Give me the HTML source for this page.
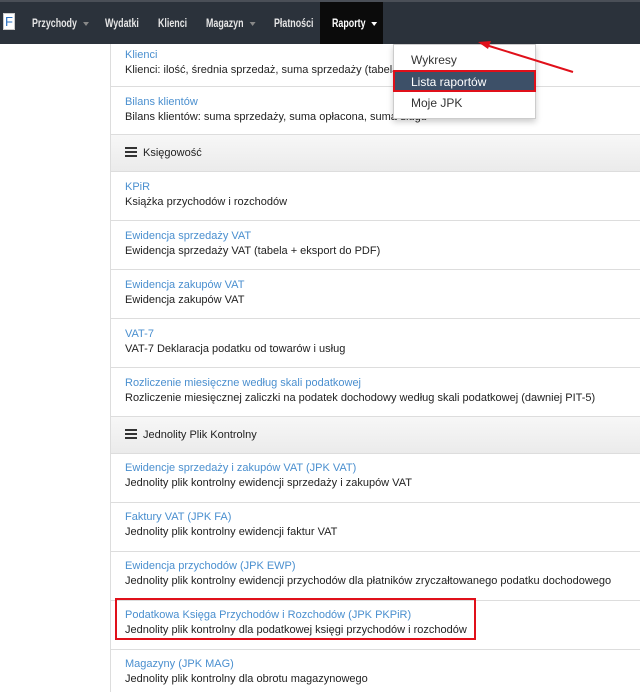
<!DOCTYPE html>
<html><head><meta charset="utf-8"><style>
*{margin:0;padding:0;box-sizing:border-box}
body{width:640px;height:692px;overflow:hidden;background:#fff;font-family:"Liberation Sans",Arial,sans-serif;font-size:11px;color:#222;position:relative}
.nav{position:absolute;left:0;top:0;width:640px;height:44px;background:#2b323b;border-top:2px solid #4a4f57}
.nav span{position:absolute;top:14px;color:#e6e6e6;font-size:12px;font-weight:bold;transform:scaleX(0.74);transform-origin:0 0;white-space:nowrap}
.caret{display:inline-block;width:0;height:0;border-left:4.5px solid transparent;border-right:4.5px solid transparent;border-top:4px solid #888;vertical-align:middle;margin-left:8px}
.rap{position:absolute;left:320px;top:0;width:63px;height:42px;background:#0b0b0b}
.logo{position:absolute;left:3px;top:11px;width:12px;height:17px;background:#fff;border:1px solid #ccc;color:#2a70c0;font-size:13px;line-height:15px;text-align:center}
.main{position:absolute;left:110px;top:44px;width:530px;height:648px;border-left:1px solid #ddd}
.row{position:absolute;left:0;width:530px;border-bottom:1px solid #ddd;padding-left:14px}
.row a{display:block;color:#4a8fcf;font-size:11px;margin-top:3px}
.row p{font-size:11px;margin-top:3px;color:#222}
.hdr{position:absolute;left:0;width:530px;height:37px;background:linear-gradient(#f7f7f7,#ebebeb);border-bottom:1px solid #ddd;padding:12px 0 0 14px;font-size:11px}
.hb{display:inline-block;width:12px;height:10px;border-top:2px solid #333;border-bottom:2px solid #333;position:relative;vertical-align:-1px;margin-right:6px}
.hb:after{content:"";position:absolute;left:0;top:2px;width:12px;height:2px;background:#333}
.dd{position:absolute;left:393px;top:44px;width:143px;height:75px;background:#fff;border:1px solid #ccc;box-shadow:0 3px 6px rgba(0,0,0,.2)}
.dd div{position:absolute;left:17px;font-size:12px;color:#333}
.sel{position:absolute;left:393px;top:70px;width:143px;height:22px;background:#3d5068;border:2px solid #e0101a}
.sel span{position:absolute;left:16px;top:3px;color:#fff;font-size:12px}
</style></head><body>
<div class="main">
<div class="row" style="top:0;height:43px;padding-top:2px"><a>Klienci</a><p>Klienci: ilość, średnia sprzedaż, suma sprzedaży (tabela + eksport do PDF)</p></div>
<div class="row" style="top:43px;height:48px;padding-top:6px"><a>Bilans klientów</a><p>Bilans klientów: suma sprzedaży, suma opłacona, suma długu</p></div>
<div class="hdr" style="top:91px"><span class="hb"></span>Księgowość</div>
<div class="row" style="top:128px;height:49px;padding-top:6px"><a>KPiR</a><p>Książka przychodów i rozchodów</p></div>
<div class="row" style="top:177px;height:49px;padding-top:6px"><a>Ewidencja sprzedaży VAT</a><p>Ewidencja sprzedaży VAT (tabela + eksport do PDF)</p></div>
<div class="row" style="top:226px;height:49px;padding-top:6px"><a>Ewidencja zakupów VAT</a><p>Ewidencja zakupów VAT</p></div>
<div class="row" style="top:275px;height:49px;padding-top:6px"><a>VAT-7</a><p>VAT-7 Deklaracja podatku od towarów i usług</p></div>
<div class="row" style="top:324px;height:49px;padding-top:6px"><a>Rozliczenie miesięczne według skali podatkowej</a><p>Rozliczenie miesięcznej zaliczki na podatek dochodowy według skali podatkowej (dawniej PIT-5)</p></div>
<div class="hdr" style="top:373px"><span class="hb"></span>Jednolity Plik Kontrolny</div>
<div class="row" style="top:410px;height:49px;padding-top:5px"><a>Ewidencje sprzedaży i zakupów VAT (JPK VAT)</a><p>Jednolity plik kontrolny ewidencji sprzedaży i zakupów VAT</p></div>
<div class="row" style="top:459px;height:49px;padding-top:5px"><a>Faktury VAT (JPK FA)</a><p>Jednolity plik kontrolny ewidencji faktur VAT</p></div>
<div class="row" style="top:508px;height:49px;padding-top:5px"><a>Ewidencja przychodów (JPK EWP)</a><p>Jednolity plik kontrolny ewidencji przychodów dla płatników zryczałtowanego podatku dochodowego</p></div>
<div class="row" style="top:557px;height:49px;padding-top:5px"><a>Podatkowa Księga Przychodów i Rozchodów (JPK PKPiR)</a><p>Jednolity plik kontrolny dla podatkowej księgi przychodów i rozchodów</p></div>
<div class="row" style="top:606px;height:49px;padding-top:5px;border:none"><a>Magazyny (JPK MAG)</a><p>Jednolity plik kontrolny dla obrotu magazynowego</p></div>
</div>
<div style="position:absolute;left:115px;top:598px;width:361px;height:42px;border:2px solid #e0101a"></div>
<div class="nav">
<div class="logo">F</div>
<div class="rap"></div>
<span style="left:32px">Przychody<i class="caret"></i></span>
<span style="left:105px">Wydatki</span>
<span style="left:158px">Klienci</span>
<span style="left:206px">Magazyn<i class="caret"></i></span>
<span style="left:274px">Płatności</span>
<span style="left:332px;color:#fff">Raporty<i class="caret" style="border-top-color:#fff"></i></span>
</div>
<div class="dd"><div style="top:8px">Wykresy</div><div style="top:51px">Moje JPK</div></div>
<div class="sel"><span>Lista raportów</span></div>
<svg style="position:absolute;left:0;top:0" width="640" height="692"><line x1="573" y1="72" x2="486" y2="45" stroke="#e0101a" stroke-width="2"/><polygon points="478,42 491,41 488,49" fill="#e0101a"/></svg>
</body></html>
